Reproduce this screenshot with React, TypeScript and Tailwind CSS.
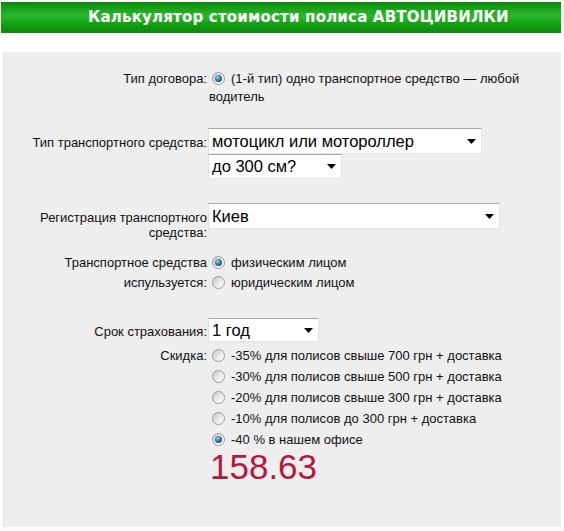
import React from 'react';

const Radio: React.FC<{ checked?: boolean }> = ({ checked }) => (
  <span className="inline-flex items-center justify-center w-[13px] h-[13px] rounded-full border border-[#9c9c9c] bg-[linear-gradient(135deg,#c8c8c8,#eeeeee_60%,#ffffff)] align-middle mx-[3px] relative top-[-1px]">
    {checked && (
      <span className="block w-[7px] h-[7px] rounded-full bg-[radial-gradient(circle_at_40%_35%,#8fd0ee,#23678f_55%,#0c3553)]" />
    )}
  </span>
);

const Select: React.FC<{ text: string; w: string; h: string }> = ({ text, w, h }) => (
  <div className={`${w} ${h} flex items-center justify-between bg-white border border-[#e2e2e2] border-t-[#a8a8a8] pl-[3px] pr-[5px] text-[16.5px] text-black`}>
    <span>{text}</span>
    <svg width="9" height="5" viewBox="0 0 9 5">
      <polygon points="0,0 9,0 4.5,5" fill="#000" />
    </svg>
  </div>
);

const discounts = [
  { text: '-35% для полисов свыше 700 грн + доставка', checked: false },
  { text: '-30% для полисов свыше 500 грн + доставка', checked: false },
  { text: '-20% для полисов свыше 300 грн + доставка', checked: false },
  { text: '-10% для полисов до 300 грн + доставка', checked: false },
  { text: '-40 % в нашем офисе', checked: true },
];

export default function App() {
  return (
    <div className="w-[564px] h-[531px] bg-white pt-[2px] font-['Liberation_Sans',Arial,sans-serif] text-[13px] text-[#111]">
      <div className="ml-[1px] w-[560px] h-[31px] flex items-center pl-[87px] bg-[linear-gradient(to_bottom,#0a870a_0%,#1ca51c_25%,#2ab82a_45%,#15a015_70%,#0a8a0a_100%)]">
        <h1 className="font-['DejaVu_Sans',Verdana,sans-serif] font-bold text-[15px] text-white tracking-[0.2px]">
          Калькулятор стоимости полиса АВТОЦИВИЛКИ
        </h1>
      </div>

      <div className="mt-[19px] ml-[3px] w-[558px] h-[475px] bg-[#eeeeee] border-l border-[#e2e2e2] pt-[18px]">
        {/* Тип договора */}
        <div className="flex h-[58px]">
          <div className="w-[203px] text-right leading-[18px] shrink-0">Тип договора:</div>
          <div className="w-[318px] ml-[2px] leading-[18px]">
            <Radio checked />
            <span className="ml-[3px]">(1-й тип) одно транспортное средство — любой водитель</span>
          </div>
        </div>

        {/* Тип транспортного средства */}
        <div className="flex items-baseline h-[75px]">
          <div className="w-[203px] text-right shrink-0">Тип транспортного средства:</div>
          <div className="ml-[1px] flex flex-col">
            <Select text="мотоцикл или мотороллер" w="w-[274px]" h="h-[26px]" />
            <Select text="до 300 см?" w="w-[134px]" h="h-[25px]" />
          </div>
        </div>

        {/* Регистрация */}
        <div className="flex items-baseline h-[50px]">
          <div className="w-[203px] text-right leading-[15px] shrink-0 pl-[30px]">
            Регистрация транспортного средства:
          </div>
          <div className="ml-[1px]">
            <Select text="Киев" w="w-[292px]" h="h-[26px]" />
          </div>
        </div>

        {/* Используется */}
        <div className="flex h-[65px]">
          <div className="w-[203px] text-right leading-[20px] shrink-0">
            Транспортное средства
            <br />
            испульзуется:
          </div>
          <div className="ml-[2px] flex flex-col">
            <div className="leading-[20px]">
              <Radio checked />
              <span className="ml-[3px]">физическим лицом</span>
            </div>
            <div className="leading-[20px]">
              <Radio />
              <span className="ml-[3px]">юридическим лицом</span>
            </div>
          </div>
        </div>

        {/* Срок */}
        <div className="flex items-baseline h-[27px]">
          <div className="w-[203px] text-right shrink-0">Срок страхования:</div>
          <div className="ml-[1px]">
            <Select text="1 год" w="w-[111px]" h="h-[24px]" />
          </div>
        </div>

        {/* Скидка */}
        <div className="flex">
          <div className="w-[203px] text-right leading-[21px] shrink-0">Скидка:</div>
          <div className="ml-[2px] flex flex-col">
            {discounts.map((d, i) => (
              <div key={i} className="leading-[21px]">
                <Radio checked={d.checked} />
                <span className="ml-[3px]">{d.text}</span>
              </div>
            ))}
            <div className="text-[35px] leading-[35px] text-[#b3193d] ml-[1px] -mt-[1px]">158.63</div>
          </div>
        </div>
      </div>
    </div>
  );
}
